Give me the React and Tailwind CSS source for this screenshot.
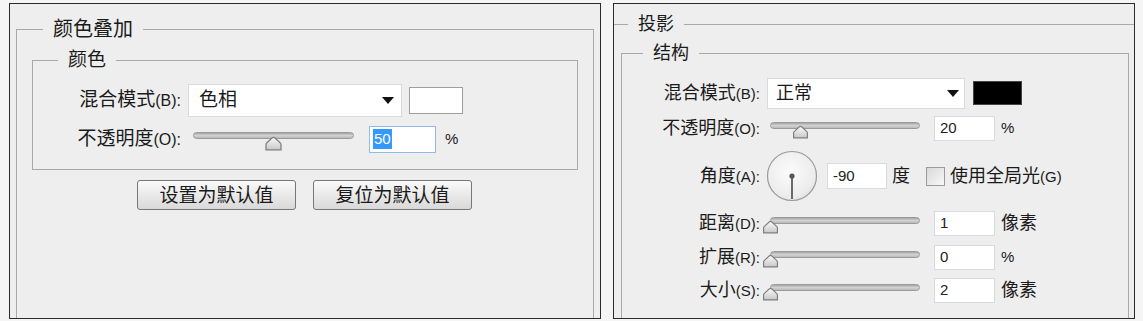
import React from 'react';

const font = "font-['Liberation_Sans','Noto_Sans_CJK_SC',sans-serif]";

const Thumb = ({ w, h }) => (
  <svg width={w} height={h} viewBox="0 0 16 13">
    <defs>
      <linearGradient id="thumbFill" x1="0" y1="0" x2="0" y2="1">
        <stop offset="0" stopColor="#fbfbfb" />
        <stop offset="1" stopColor="#c8c8c8" />
      </linearGradient>
    </defs>
    <path d="M1.5 12 L1.5 7.5 Q1.5 6.5 2.5 5.7 L7 1.6 Q8 0.8 9 1.6 L13.5 5.7 Q14.5 6.5 14.5 7.5 L14.5 12 Z" fill="url(#thumbFill)" stroke="#7e7e7e" strokeWidth="1.1" />
  </svg>
);

const Slider = ({ width, value, thumbW, thumbH, thumbTop }) => (
  <div className="relative mt-[4px]" style={{ width, height: thumbTop + thumbH }}>
    <div className="h-[7px] rounded-full border border-[#9a9a9a] bg-gradient-to-b from-[#a6a6a6] via-[#d2d2d2] to-[#bababa]" />
    <div className="absolute" style={{ top: thumbTop, left: width * value - thumbW / 2 }}>
      <Thumb w={thumbW} h={thumbH} />
    </div>
  </div>
);

const Arrow = () => (
  <svg width="12" height="7" viewBox="0 0 12 7">
    <path d="M0 0 L12 0 L6 7 Z" fill="#111" />
  </svg>
);

const Dial = () => (
  <svg width="52" height="52" viewBox="0 0 52 52">
    <defs>
      <radialGradient id="dialFill" cx="0.45" cy="0.4" r="0.65">
        <stop offset="0" stopColor="#fbfbfb" />
        <stop offset="0.8" stopColor="#ececec" />
        <stop offset="1" stopColor="#dcdcdc" />
      </radialGradient>
    </defs>
    <circle cx="26" cy="26" r="24.5" fill="url(#dialFill)" stroke="#9a9a9a" strokeWidth="1.2" />
    <line x1="26" y1="26" x2="26" y2="49" stroke="#6a6a6a" strokeWidth="2" />
    <circle cx="26" cy="26" r="2.6" fill="#555" />
  </svg>
);

const Legend = ({ children, ml, size }) => (
  <div className={`-mt-[13px] w-fit px-[10px] bg-[#eeeeee] leading-[24px] ${ml} ${size}`}>{children}</div>
);

const Label = ({ text, hint, w, small }) => (
  <div className={`${w} shrink-0 text-right whitespace-nowrap`}>
    {text}
    <span className={small}>{hint}</span>
  </div>
);

const NumBox = ({ value, w, h, pl = 'pl-[5px]' }) => (
  <div className={`${w} ${h} ${pl} shrink-0 bg-white border border-[#d6dbe1] flex items-center text-[15px] text-[#222]`}>
    {value}
  </div>
);

const ColorOverlay = () => (
  <div className="w-[592px] h-[316px] shrink-0 border border-[#2b2b2b] bg-[#eeeeee] flex flex-col text-[19px] text-[#1a1a1a]">
    <div className="flex-1 mt-[25px] ml-[6px] mr-[6px] border-t border-l border-r border-[#a9a9a9] flex flex-col">
      <Legend ml="ml-[26px]" size="text-[20px]">颜色叠加</Legend>

      <div className="mt-[19px] ml-[15px] mr-[15px] border border-[#a9a9a9] pb-[8px]">
        <Legend ml="ml-[25px]" size="text-[19px]">颜色</Legend>

        <div className="mt-[11px] h-[34px] flex items-center">
          <Label text="混合模式" hint="(B):" w="w-[148px]" small="text-[16px]" />
          <div className="ml-[7px] w-[214px] h-[33px] bg-white border border-[#dadada] flex items-center justify-between pl-[10px] pr-[7px]">
            <span>色相</span>
            <Arrow />
          </div>
          <div className="ml-[7px] w-[54px] h-[27px] bg-white border border-[#9e9e9e]" />
        </div>

        <div className="h-[44px] flex items-center">
          <Label text="不透明度" hint="(O):" w="w-[148px]" small="text-[16px]" />
          <div className="ml-[12px]">
            <Slider width={161} value={0.5} thumbW={19} thumbH={15} thumbTop={4} />
          </div>
          <div className="ml-[15px] w-[67px] h-[27px] bg-white border border-[#8fbbe6] flex items-center pl-[3px]">
            <span className="bg-[#3399ff] text-white text-[15px] leading-[20px] px-[1px]">50</span>
          </div>
          <span className="ml-[9px] text-[15px]">%</span>
        </div>
      </div>

      <div className="mt-[10px] ml-[120px] flex gap-[17px]">
        <button className="w-[159px] h-[30px] rounded-[3px] border border-[#777] bg-gradient-to-b from-[#fafafa] to-[#d9d9d9] text-[19px] leading-none">
          设置为默认值
        </button>
        <button className="w-[159px] h-[30px] rounded-[3px] border border-[#777] bg-gradient-to-b from-[#fafafa] to-[#d9d9d9] text-[19px] leading-none">
          复位为默认值
        </button>
      </div>
    </div>
  </div>
);

const SliderRow = ({ label, hint, h, value, unit }) => (
  <div className={`${h} flex items-center`}>
    <Label text={label} hint={hint} w="w-[138px]" small="text-[15px]" />
    <div className="ml-[10px]">
      <Slider width={150} value={value.pos} thumbW={17} thumbH={14} thumbTop={3} />
    </div>
    <div className="ml-[14px]">
      <NumBox value={value.text} w="w-[61px]" h="h-[25px]" />
    </div>
    <span className={`ml-[6px] ${unit === '%' ? 'text-[15px]' : ''}`}>{unit}</span>
  </div>
);

const DropShadow = () => (
  <div className="w-[522px] h-[316px] shrink-0 border border-[#2b2b2b] bg-[#eeeeee] flex flex-col text-[18px] text-[#1a1a1a]">
    <div className="flex-1 mt-[20px] border-t border-[#a9a9a9] flex flex-col">
      <Legend ml="ml-[14px]" size="text-[18px]">投影</Legend>

      <div className="flex-1 mt-[17px] ml-[7px] mr-[5px] border-t border-l border-r border-[#a9a9a9]">
        <Legend ml="ml-[21px]" size="text-[18px]">结构</Legend>

        <div className="mt-[12px] h-[32px] flex items-center">
          <Label text="混合模式" hint="(B):" w="w-[138px]" small="text-[15px]" />
          <div className="ml-[7px] w-[198px] h-[31px] bg-white border border-[#dadada] flex items-center justify-between pl-[8px] pr-[5px]">
            <span>正常</span>
            <Arrow />
          </div>
          <div className="ml-[8px] w-[49px] h-[24px] bg-black border border-[#444]" />
        </div>

        <SliderRow label="不透明度" hint="(O):" h="h-[38px]" value={{ pos: 0.2, text: '20' }} unit="%" />

        <div className="h-[58px] flex items-center">
          <Label text="角度" hint="(A):" w="w-[138px]" small="text-[15px]" />
          <div className="ml-[6px] flex">
            <Dial />
          </div>
          <div className="ml-[9px]">
            <NumBox value="-90" w="w-[60px]" h="h-[26px]" />
          </div>
          <span className="ml-[5px]">度</span>
          <div className="ml-[16px] w-[19px] h-[19px] border border-[#9a9a9a] bg-gradient-to-br from-[#d8d8d8] to-[#f8f8f8]" />
          <span className="ml-[5px]">
            使用全局光<span className="text-[15px]">(G)</span>
          </span>
        </div>

        <SliderRow label="距离" hint="(D):" h="h-[36px]" value={{ pos: 0, text: '1' }} unit="像素" />
        <SliderRow label="扩展" hint="(R):" h="h-[33px]" value={{ pos: 0, text: '0' }} unit="%" />
        <SliderRow label="大小" hint="(S):" h="h-[32px]" value={{ pos: 0, text: '2' }} unit="像素" />
      </div>
    </div>
  </div>
);

export default function App() {
  return (
    <div className={`w-[1143px] h-[321px] bg-[#f5f5f5] flex items-start pt-[3px] pl-[9px] gap-[12px] ${font}`}>
      <ColorOverlay />
      <DropShadow />
    </div>
  );
}
